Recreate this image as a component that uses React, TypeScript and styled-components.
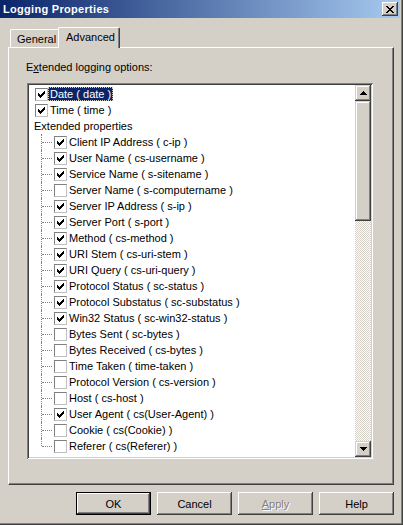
import React from "react";
import styled, { createGlobalStyle } from "styled-components";

const face = "#D4D0C8";
const shadow = "#808080";
const dark = "#404040";

const GlobalStyle = createGlobalStyle`
  html, body {
    margin: 0;
    padding: 0;
    background: ${face};
  }
  body {
    font-family: "Liberation Sans", Arial, sans-serif;
    font-size: 11px;
    color: #000;
  }
`;

const Window = styled.div`
  width: 403px;
  height: 525px;
  box-sizing: border-box;
  padding: 0 3px 3px 0;
  background: ${face};
  box-shadow: inset -1px -1px ${dark}, inset -2px -2px ${shadow};
  display: flex;
  flex-direction: column;
`;

const TitleBar = styled.div`
  height: 18px;
  background: linear-gradient(to right, #0a246a, #a6caf0);
  display: flex;
  align-items: center;
  justify-content: space-between;
  padding: 0 2px 0 3px;
`;

const Title = styled.span`
  color: #fff;
  font-weight: bold;
  font-size: 11px;
  letter-spacing: 0.3px;
`;

const CloseButton = styled.div`
  width: 16px;
  height: 14px;
  box-sizing: border-box;
  background: ${face};
  box-shadow: inset -1px -1px ${dark}, inset 1px 1px #fff, inset -2px -2px ${shadow};
  display: flex;
  align-items: center;
  justify-content: center;
`;

const Body = styled.div`
  flex: 1;
  display: flex;
  flex-direction: column;
  padding: 9px 6px 0 8px;
`;

const TabStrip = styled.div`
  height: 20px;
  display: flex;
  align-items: flex-end;
  padding-left: 2px;
`;

const Tab = styled.div<{ $active?: boolean }>`
  position: relative;
  z-index: ${(p) => (p.$active ? 2 : 1)};
  box-sizing: border-box;
  height: ${(p) => (p.$active ? 21 : 18)}px;
  width: ${(p) => (p.$active ? 62 : 50)}px;
  margin: ${(p) => (p.$active ? "0 -2px -1px -2px" : "0")};
  padding: ${(p) => (p.$active ? "3px 0 0 7px" : "3px 0 0 6px")};
  background: ${face};
  border-top: 1px solid #fff;
  border-left: 1px solid #fff;
  border-right: 1px solid ${dark};
  border-radius: 2px 2px 0 0;
  box-shadow: inset -1px 0 ${shadow};
`;

const Panel = styled.div`
  width: 386px;
  height: 438px;
  box-sizing: border-box;
  background: ${face};
  border-top: 1px solid #fff;
  border-left: 1px solid #fff;
  border-right: 1px solid ${dark};
  border-bottom: 1px solid ${dark};
  box-shadow: inset -1px -1px ${shadow};
  padding: 12px 0 0 17px;
  display: flex;
  flex-direction: column;
`;

const GroupLabel = styled.div`
  height: 14px;
  line-height: 14px;
  margin-bottom: 9px;
`;

const ListBox = styled.div`
  width: 346px;
  height: 376px;
  margin-left: 1px;
  box-sizing: border-box;
  padding: 2px;
  background: #fff;
  box-shadow: inset 1px 1px ${shadow}, inset -1px -1px #fff, inset 2px 2px ${dark},
    inset -2px -2px ${face};
  display: flex;
`;

const Rows = styled.div`
  flex: 1;
  padding-top: 1px;
  overflow: hidden;
`;

const Row = styled.div<{ $indent: number }>`
  height: 16px;
  display: flex;
  align-items: center;
  padding-left: ${(p) => p.$indent}px;
  white-space: pre;
`;

const Connector = styled.div<{ $last?: boolean }>`
  position: relative;
  width: 13px;
  height: 16px;
  flex: none;
  &::before {
    content: "";
    position: absolute;
    left: 0;
    top: 0;
    height: ${(p) => (p.$last ? "8px" : "16px")};
    border-left: 1px dotted ${shadow};
  }
  &::after {
    content: "";
    position: absolute;
    left: 1px;
    top: 8px;
    width: 10px;
    border-top: 1px dotted ${shadow};
  }
`;

const Box = styled.div`
  width: 13px;
  height: 13px;
  flex: none;
  box-sizing: border-box;
  background: #fff;
  border: 1px solid;
  border-color: ${shadow} #c0c0c0 #c0c0c0 ${shadow};
  display: flex;
`;

const Label = styled.span<{ $selected?: boolean }>`
  height: 14px;
  line-height: 14px;
  padding: 0 2px;
  color: ${(p) => (p.$selected ? "#fff" : "#000")};
  background: ${(p) => (p.$selected ? "#0a246a" : "transparent")};
  outline: ${(p) => (p.$selected ? "1px dotted #d4d0c8" : "none")};
  outline-offset: -1px;
`;

const ScrollBar = styled.div`
  width: 16px;
  display: flex;
  flex-direction: column;
`;

const raised = `
  background: ${face};
  box-shadow: inset -1px -1px ${dark}, inset 1px 1px ${face}, inset -2px -2px ${shadow},
    inset 2px 2px #fff;
`;

const ScrollButton = styled.div`
  height: 16px;
  ${raised}
  display: flex;
  align-items: center;
  justify-content: center;
`;

const Thumb = styled.div`
  height: 120px;
  ${raised}
`;

const Track = styled.div`
  flex: 1;
  background-color: ${face};
  background-image: conic-gradient(#fff 25%, ${face} 0 50%, #fff 0 75%, ${face} 0);
  background-size: 2px 2px;
`;

const ButtonRow = styled.div`
  display: flex;
  justify-content: flex-end;
  gap: 6px;
  margin-top: 7px;
`;

const PushButton = styled.div<{ $default?: boolean; $disabled?: boolean }>`
  width: 75px;
  height: 23px;
  box-sizing: border-box;
  background: ${face};
  display: flex;
  align-items: center;
  justify-content: center;
  border: ${(p) => (p.$default ? "1px solid #000" : "none")};
  box-shadow: inset -1px -1px ${dark}, inset 1px 1px #fff, inset -2px -2px ${shadow},
    inset 2px 2px ${face};
  color: ${(p) => (p.$disabled ? shadow : "#000")};
  text-shadow: ${(p) => (p.$disabled ? "1px 1px #fff" : "none")};
`;

const CheckMark = () => (
  <svg width="11" height="11" viewBox="0 0 11 11" shapeRendering="crispEdges">
    <path
      d="M2 4h1v3h-1z M3 5h1v3h-1z M4 6h1v3h-1z M5 5h1v3h-1z M6 4h1v3h-1z M7 3h1v3h-1z M8 2h1v3h-1z"
      fill="#000"
    />
  </svg>
);

const Check = ({ on }: { on: boolean }) => <Box>{on && <CheckMark />}</Box>;

const topItems = [
  { text: "Date ( date )", on: true, selected: true },
  { text: "Time ( time )", on: true },
];

const extItems = [
  ["Client IP Address ( c-ip )", true],
  ["User Name ( cs-username )", true],
  ["Service Name ( s-sitename )", true],
  ["Server Name ( s-computername )", false],
  ["Server IP Address ( s-ip )", true],
  ["Server Port ( s-port )", true],
  ["Method ( cs-method )", true],
  ["URI Stem ( cs-uri-stem )", true],
  ["URI Query ( cs-uri-query )", true],
  ["Protocol Status ( sc-status )", true],
  ["Protocol Substatus ( sc-substatus )", true],
  ["Win32 Status ( sc-win32-status )", true],
  ["Bytes Sent ( sc-bytes )", false],
  ["Bytes Received ( cs-bytes )", false],
  ["Time Taken ( time-taken )", false],
  ["Protocol Version ( cs-version )", false],
  ["Host ( cs-host )", false],
  ["User Agent ( cs(User-Agent) )", true],
  ["Cookie ( cs(Cookie) )", false],
  ["Referer ( cs(Referer) )", false],
] as [string, boolean][];

export default function App() {
  return (
    <>
      <GlobalStyle />
      <Window>
        <TitleBar>
          <Title>Logging Properties</Title>
          <CloseButton>
            <svg width="8" height="7" viewBox="0 0 8 7" shapeRendering="crispEdges">
              <path
                d="M0 0h2v1h-2z M6 0h2v1h-2z M1 1h2v1h-2z M5 1h2v1h-2z M2 2h4v1h-4z M3 3h2v1h-2z M2 4h4v1h-4z M1 5h2v1h-2z M5 5h2v1h-2z M0 6h2v1h-2z M6 6h2v1h-2z"
                fill="#000"
              />
            </svg>
          </CloseButton>
        </TitleBar>
        <Body>
          <TabStrip>
            <Tab>General</Tab>
            <Tab $active>Advanced</Tab>
          </TabStrip>
          <Panel>
            <GroupLabel>
              E<u>x</u>tended logging options:
            </GroupLabel>
            <ListBox>
              <Rows>
                {topItems.map((it) => (
                  <Row key={it.text} $indent={6}>
                    <Check on={it.on} />
                    <Label $selected={it.selected}>{it.text}</Label>
                  </Row>
                ))}
                <Row $indent={3}>
                  <Label>Extended properties</Label>
                </Row>
                {extItems.map(([text, on], i) => (
                  <Row key={text} $indent={12}>
                    <Connector $last={i === extItems.length - 1} />
                    <Check on={on} />
                    <Label>{text}</Label>
                  </Row>
                ))}
              </Rows>
              <ScrollBar>
                <ScrollButton>
                  <svg width="7" height="4" viewBox="0 0 7 4" shapeRendering="crispEdges">
                    <path d="M3 0h1v1h-1z M2 1h3v1h-3z M1 2h5v1h-5z M0 3h7v1h-7z" fill="#000" />
                  </svg>
                </ScrollButton>
                <Thumb />
                <Track />
                <ScrollButton>
                  <svg width="7" height="4" viewBox="0 0 7 4" shapeRendering="crispEdges">
                    <path d="M0 0h7v1h-7z M1 1h5v1h-5z M2 2h3v1h-3z M3 3h1v1h-1z" fill="#000" />
                  </svg>
                </ScrollButton>
              </ScrollBar>
            </ListBox>
          </Panel>
          <ButtonRow>
            <PushButton $default>OK</PushButton>
            <PushButton>Cancel</PushButton>
            <PushButton $disabled>
              <span>
                <u>A</u>pply
              </span>
            </PushButton>
            <PushButton>Help</PushButton>
          </ButtonRow>
        </Body>
      </Window>
    </>
  );
}
